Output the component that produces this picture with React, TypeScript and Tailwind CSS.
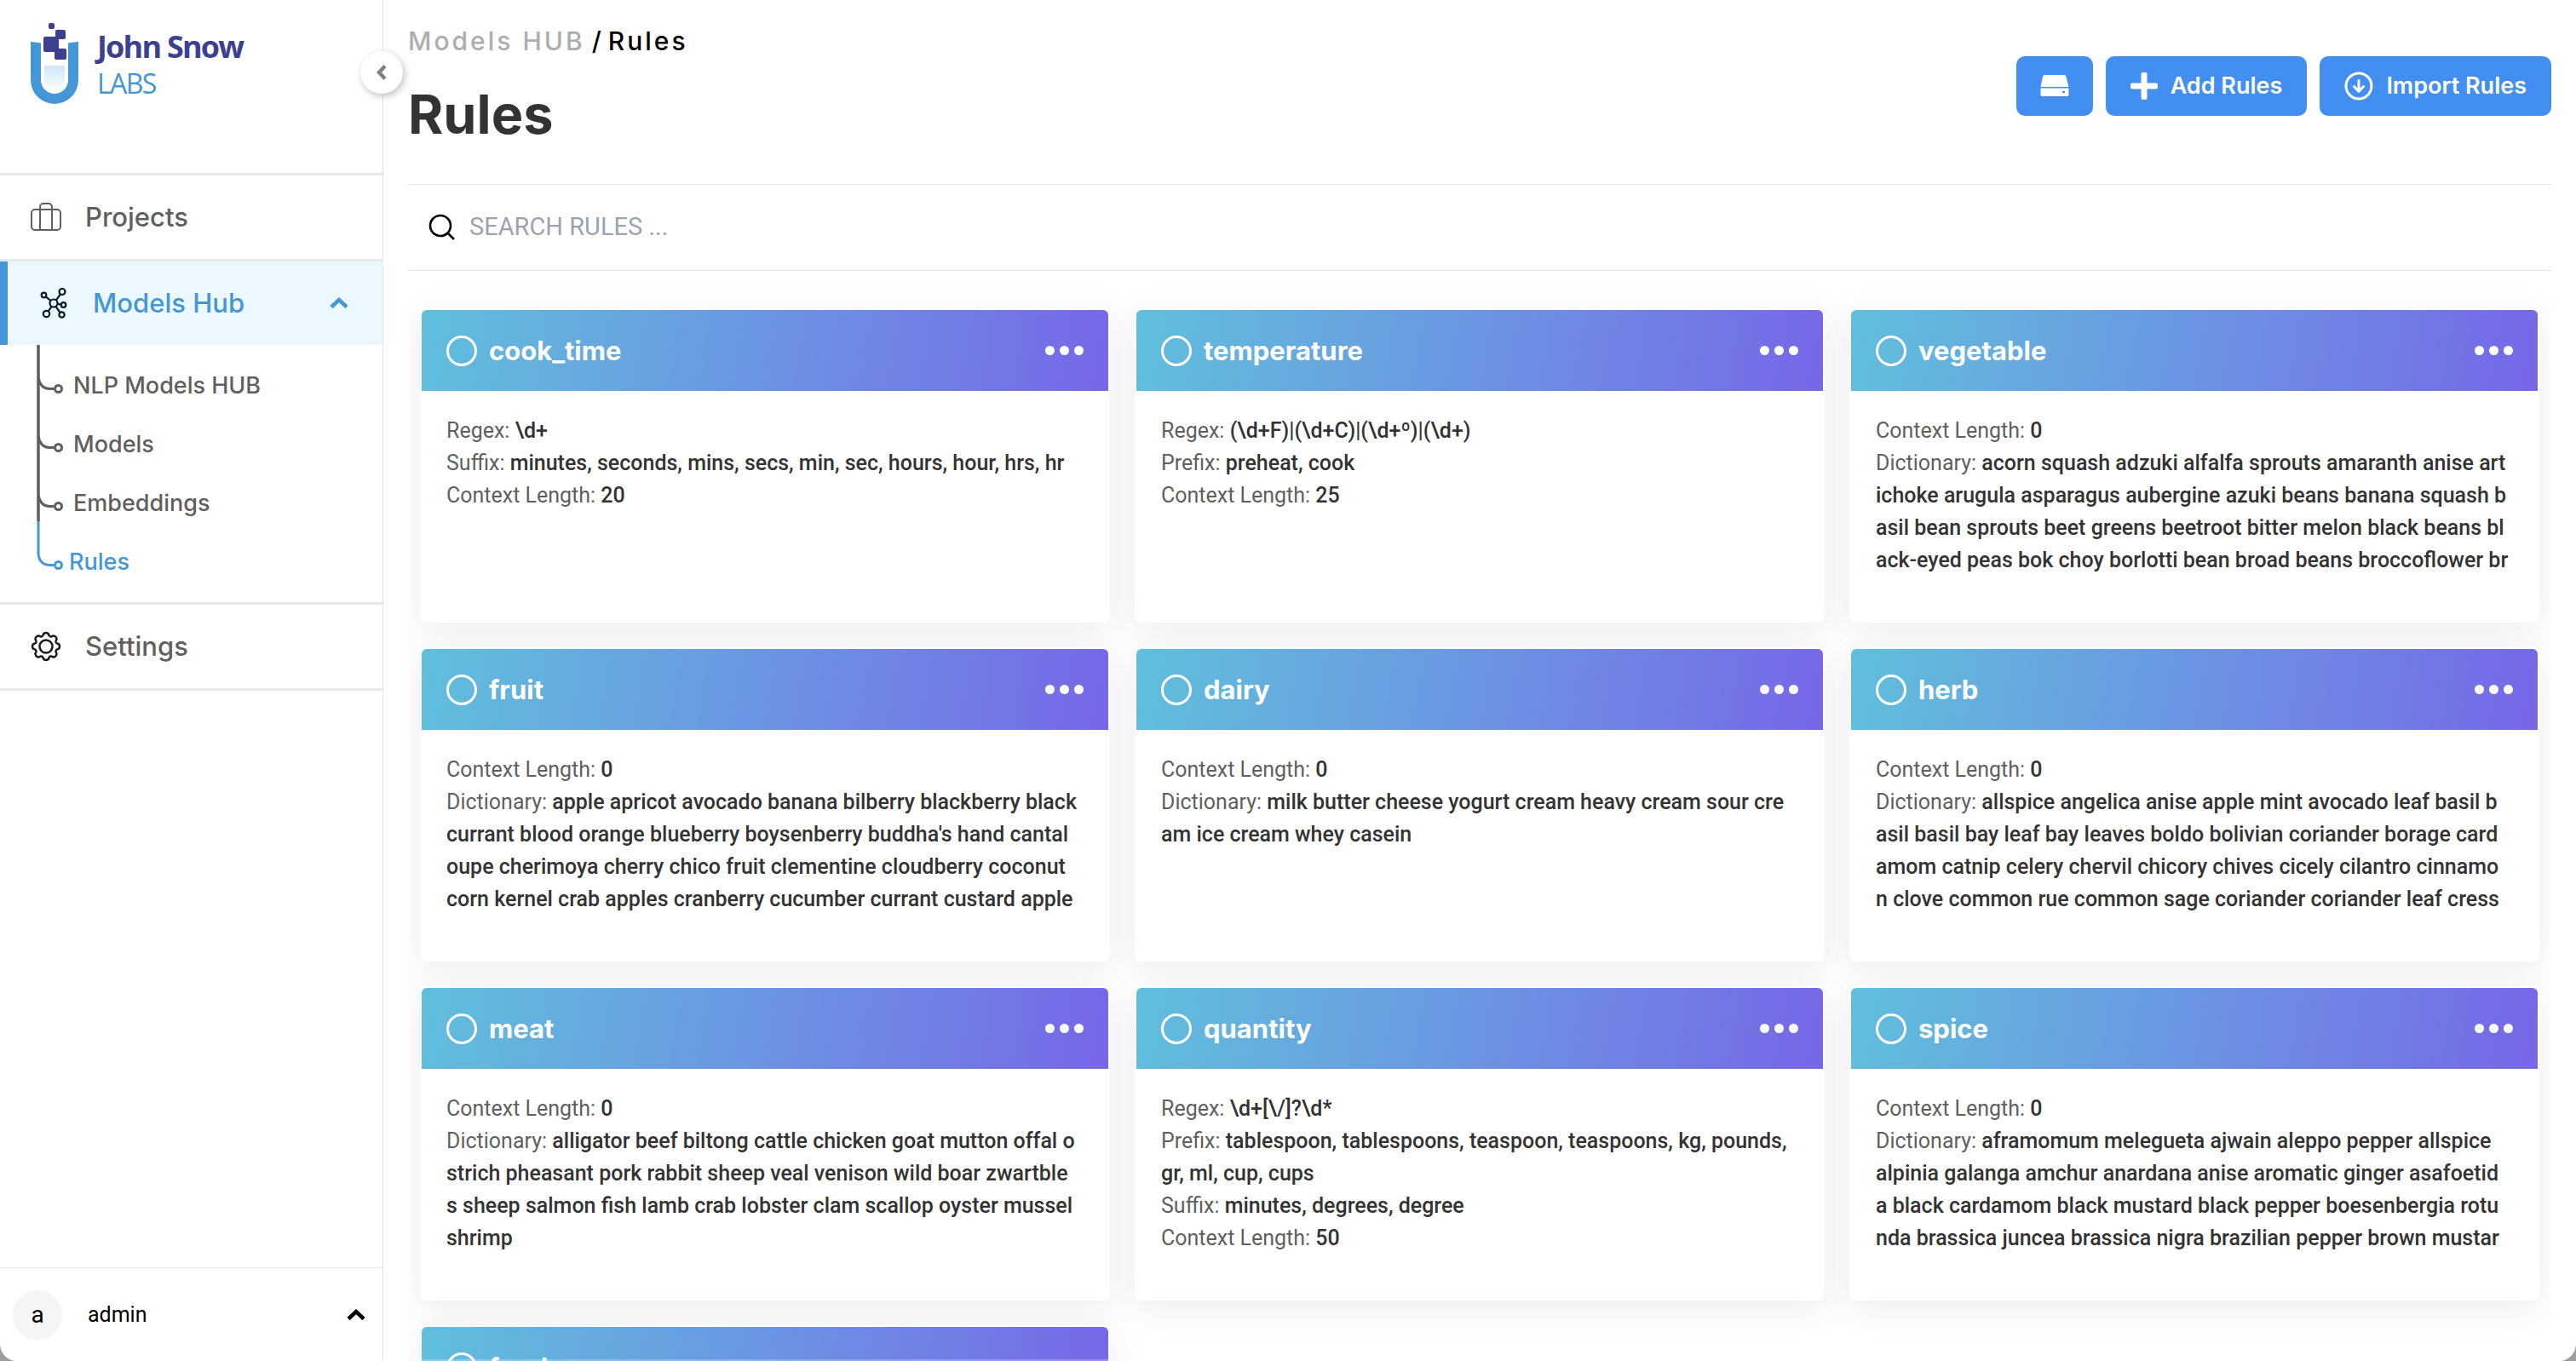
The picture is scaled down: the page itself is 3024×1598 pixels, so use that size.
const F = "font-['Inter',sans-serif]";

type Field = { label: string; value: string };
type Rule = { name: string; fields: Field[] };

const ctx = (value: string): Field => ({ label: "Context Length", value });
const dict = (...lines: string[]): Field => ({ label: "Dictionary", value: lines.join("\n") });

const RULES: Rule[] = [
  {
    name: "cook_time",
    fields: [
      { label: "Regex", value: "\\d+" },
      { label: "Suffix", value: "minutes, seconds, mins, secs, min, sec, hours, hour, hrs, hr" },
      ctx("20"),
    ],
  },
  {
    name: "temperature",
    fields: [
      { label: "Regex", value: "(\\d+F)|(\\d+C)|(\\d+º)|(\\d+)" },
      { label: "Prefix", value: "preheat, cook" },
      ctx("25"),
    ],
  },
  {
    name: "vegetable",
    fields: [
      ctx("0"),
      dict(
        "acorn squash adzuki alfalfa sprouts amaranth anise art",
        "ichoke arugula asparagus aubergine azuki beans banana squash b",
        "asil bean sprouts beet greens beetroot bitter melon black beans bl",
        "ack-eyed peas bok choy borlotti bean broad beans broccoflower br",
      ),
    ],
  },
  {
    name: "fruit",
    fields: [
      ctx("0"),
      dict(
        "apple apricot avocado banana bilberry blackberry black",
        "currant blood orange blueberry boysenberry buddha's hand cantal",
        "oupe cherimoya cherry chico fruit clementine cloudberry coconut",
        "corn kernel crab apples cranberry cucumber currant custard apple",
      ),
    ],
  },
  {
    name: "dairy",
    fields: [
      ctx("0"),
      dict("milk butter cheese yogurt cream heavy cream sour cre", "am ice cream whey casein"),
    ],
  },
  {
    name: "herb",
    fields: [
      ctx("0"),
      dict(
        "allspice angelica anise apple mint avocado leaf basil b",
        "asil basil bay leaf bay leaves boldo bolivian coriander borage card",
        "amom catnip celery chervil chicory chives cicely cilantro cinnamo",
        "n clove common rue common sage coriander coriander leaf cress",
      ),
    ],
  },
  {
    name: "meat",
    fields: [
      ctx("0"),
      dict(
        "alligator beef biltong cattle chicken goat mutton offal o",
        "strich pheasant pork rabbit sheep veal venison wild boar zwartble",
        "s sheep salmon fish lamb crab lobster clam scallop oyster mussel",
        "shrimp",
      ),
    ],
  },
  {
    name: "quantity",
    fields: [
      { label: "Regex", value: "\\d+[\\/]?\\d*" },
      { label: "Prefix", value: "tablespoon, tablespoons, teaspoon, teaspoons, kg, pounds, gr, ml, cup, cups" },
      { label: "Suffix", value: "minutes, degrees, degree" },
      ctx("50"),
    ],
  },
  {
    name: "spice",
    fields: [
      ctx("0"),
      dict(
        "aframomum melegueta ajwain aleppo pepper allspice",
        "alpinia galanga amchur anardana anise aromatic ginger asafoetid",
        "a black cardamom black mustard black pepper boesenbergia rotu",
        "nda brassica juncea brassica nigra brazilian pepper brown mustar",
      ),
    ],
  },
  { name: "food", fields: [ctx("0")] },
];

function Logo() {
  return (
    <a href="#home" className="flex items-start gap-[22px] pl-9 pt-7">
      <svg width="56" height="94" viewBox="0 0 56 94" className="overflow-visible" aria-hidden="true">
        <defs>
          <linearGradient id="liquid" x1="0" y1="0" x2="0" y2="1">
            <stop offset="0" stopColor="#cbe8f8" />
            <stop offset="1" stopColor="#ffffff" />
          </linearGradient>
        </defs>
        <path d="M16 49H40V68a12 12 0 0 1-24 0Z" fill="url(#liquid)" />
        <path d="M0 21L12 22.500V66a16 16 0 0 0 32 0V22.500L56 21V66a28 28 0 0 1-56 0Z" fill="#4596d5" />
        <g fill="#3d3f91">
          <rect x="21" y="-1" width="7" height="7" rx="2" />
          <rect x="29" y="7" width="12" height="11" rx="2" />
          <rect x="15" y="15" width="18" height="18" rx="2" />
          <rect x="28" y="29" width="14" height="13" rx="2" />
        </g>
      </svg>
      <span className="flex flex-col pt-1 font-['Open_Sans',sans-serif]">
        <span className="text-[36px] font-bold leading-[46px] tracking-tighter text-[#3d3f91]">John Snow</span>
        <span className="text-[32px] leading-[40px] tracking-tighter text-[#4596d5]">LABS</span>
      </span>
    </a>
  );
}

function ChevronUp({ className }: { className: string }) {
  return (
    <svg width="22" height="14" viewBox="0 0 22 14" fill="none" stroke="currentColor" strokeWidth="4.500" className={className} aria-hidden="true">
      <path d="M2 11.500L11 3L20 11.500" />
    </svg>
  );
}

function Branch({ last }: { last?: boolean }) {
  return (
    <svg width="32" height="69" viewBox="0 0 32 69" fill="none" stroke="currentColor" strokeWidth="3" className="shrink-0 overflow-visible" aria-hidden="true">
      {last ? (
        <path d="M2 0V38Q3 51 15 51.500H20" />
      ) : (
        <>
          <path d="M2 0V69" strokeWidth="3.500" />
          <path d="M2 38Q4 51 15 51.500H20" />
        </>
      )}
      <circle cx="25.500" cy="51.500" r="4" />
    </svg>
  );
}

function Sidebar() {
  return (
    <aside className={`relative flex w-[450px] shrink-0 flex-col border-r border-[#e6e6e6] ${F}`}>
      <div className="h-[203px]">
        <Logo />
      </div>
      <button type="button" aria-label="Collapse sidebar" className="absolute -right-[24px] top-[60px] z-10 flex size-[50px] items-center justify-center rounded-full bg-white text-[#808080] shadow-[2px_3px_8px_rgba(0,0,0,0.25)]">
        <svg width="12" height="18" viewBox="0 0 12 18" fill="none" stroke="currentColor" strokeWidth="4.500" aria-hidden="true">
          <path d="M10 1.500L3 9L10 16.500" />
        </svg>
      </button>
      <nav className="flex flex-col text-[31px] font-medium text-[#5f5f5f]">
        <a href="#projects" className="flex h-[101px] items-center gap-7 border-t-[3px] border-[#e8e8e8] pl-9">
          <svg width="36" height="34" viewBox="0 0 36 34" fill="none" stroke="currentColor" strokeWidth="2" aria-hidden="true">
            <rect x="1" y="8" width="34" height="24" rx="4" />
            <path d="M11 32V5a4 4 0 0 1 4-4h6a4 4 0 0 1 4 4V32" />
          </svg>
          Projects
        </a>
        <a href="#models-hub" aria-expanded="true" className="flex h-[101px] items-center border-t-[3px] border-[#e8e8e8] bg-[#ecf8ff] text-[#4596d5]">
          <span className="h-full w-[9px] bg-[#4596d5]" />
          <svg width="32" height="36" viewBox="0 0 32 36" fill="none" stroke="#0b1a28" strokeWidth="2.200" className="ml-[38px]" aria-hidden="true">
            <circle cx="16" cy="18" r="4.500" />
            <circle cx="4.500" cy="8.500" r="2.800" />
            <circle cx="26" cy="4.500" r="3.500" />
            <circle cx="27.500" cy="20" r="2.800" />
            <circle cx="7.500" cy="30.500" r="3.700" />
            <circle cx="25.500" cy="31.500" r="3.200" />
            <path d="M6.800 10.300L12.500 15M24 7.500L18.800 14.300M20.500 18.800L24.700 19.600M13.500 21.800L9.600 27.500M18.500 21.800L23.500 29" />
          </svg>
          <span className="ml-[30px]">Models Hub</span>
          <ChevronUp className="ml-auto mr-10" />
        </a>
        <ul className="flex flex-col pb-[26px] pl-[43px] text-[27px]">
          {["NLP Models HUB", "Models", "Embeddings"].map((label) => (
            <li key={label} className="h-[69px]">
              <a href={"#" + label} className="flex items-start gap-[11px]">
                <Branch />
                <span className="mt-[30px] leading-9">{label}</span>
              </a>
            </li>
          ))}
          <li className="h-[69px] text-[#4596d5]">
            <a href="#rules" aria-current="page" className="flex items-start gap-[6px]">
              <Branch last />
              <span className="mt-[30px] leading-9">Rules</span>
            </a>
          </li>
        </ul>
        <a href="#settings" className="flex h-[104px] items-center gap-7 border-y-[3px] border-[#e8e8e8] pl-9">
          <svg width="36" height="36" viewBox="0 0 36 36" fill="none" stroke="#1a1a1a" strokeWidth="2.400" strokeLinejoin="round" aria-hidden="true">
            <circle cx="18" cy="18" r="7.500" />
            <path d="M14.500 5Q15 2 18 2Q21 2 21.500 5Q22.500 7 24.800 6.300Q27 4.500 29.300 6.700Q31.500 9 29.700 11.200Q29 13.500 31 14.500Q34 15 34 18Q34 21 31 21.500Q29 22.500 29.700 24.800Q31.500 27 29.300 29.300Q27 31.500 24.800 29.700Q22.500 29 21.500 31Q21 34 18 34Q15 34 14.500 31Q13.500 29 11.200 29.700Q9 31.500 6.700 29.300Q4.500 27 6.300 24.800Q7 22.500 5 21.500Q2 21 2 18Q2 15 5 14.500Q7 13.500 6.300 11.200Q4.500 9 6.700 6.700Q9 4.500 11.200 6.300Q13.500 7 14.500 5Z" />
          </svg>
          Settings
        </a>
      </nav>
      <button type="button" className="mt-auto flex h-[110px] items-center border-t border-[#e6e6e6] pl-[15px] font-['Roboto',sans-serif] text-[25px] text-black">
        <span className="flex size-[58px] items-center justify-center rounded-full bg-[#f5f5f5] text-[28px]">a</span>
        <span className="ml-[30px]">admin</span>
        <ChevronUp className="ml-auto mr-[20px]" />
      </button>
    </aside>
  );
}

const BTN = "flex h-[70px] items-center rounded-[10px] bg-[#428ff1] text-[27px] font-semibold text-white";

function Header() {
  return (
    <header className={`flex h-[217px] shrink-0 items-start justify-between border-b border-[#e6e6e6] ${F}`}>
      <div className="pt-[28px]">
        <nav aria-label="Breadcrumb" className="flex items-center gap-2 text-[30px] font-medium leading-[40px]">
          <a href="#hub" className="tracking-widest text-[#adadad]">Models HUB</a>
          <span className="text-black">/</span>
          <span className="tracking-widest text-black">Rules</span>
        </nav>
        <h1 className="mt-[32px] text-[63px] font-bold leading-[68px] text-[#333333]">Rules</h1>
      </div>
      <div className="flex gap-[15px] pt-[66px]">
        <button type="button" aria-label="Storage" className={`${BTN} w-[90px] justify-center`}>
          <svg width="34" height="26" viewBox="0 0 34 26" fill="currentColor" aria-hidden="true">
            <path d="M5 0H28Q30 0 30.500 2L33.500 14H0.500L3 2Q3.500 0 5 0Z" />
            <path d="M0.500 15.500H33.500V23Q33.500 25 31.500 25H2.500Q0.500 25 0.500 23ZM26 19V21H29V19Z" fillRule="evenodd" />
          </svg>
        </button>
        <button type="button" className={`${BTN} gap-[15px] px-[29px]`}>
          <svg width="32" height="32" viewBox="0 0 32 32" fill="currentColor" aria-hidden="true">
            <rect x="12.500" y="0" width="7" height="32" rx="2" />
            <rect x="0" y="12.500" width="32" height="7" rx="2" />
          </svg>
          Add Rules
        </button>
        <button type="button" className={`${BTN} gap-[15px] px-[29px]`}>
          <svg width="34" height="34" viewBox="0 0 34 34" fill="none" stroke="currentColor" strokeWidth="3" strokeLinecap="round" strokeLinejoin="round" aria-hidden="true">
            <circle cx="17" cy="17" r="15" />
            <path d="M17 10.500V23M11.500 17.500L17 23.500L22.500 17.500" />
          </svg>
          Import Rules
        </button>
      </div>
    </header>
  );
}

function RuleCard({ rule }: { rule: Rule }) {
  return (
    <article className="h-[369px] rounded-lg border-2 border-white bg-white shadow-[0_10px_40px_rgba(60,60,100,0.09)]">
      <div className={`flex h-[95px] items-center rounded-t-[6px] bg-linear-[100deg,#60bfdc,#6b94e2_50%,#7667e8] pl-[29px] pr-[29px] text-white ${F}`}>
        <input type="checkbox" id={"pick-" + rule.name} className="size-9 appearance-none rounded-full border-3 border-white" />
        <label htmlFor={"pick-" + rule.name} className="ml-[14px] text-[31px] font-bold leading-9">
          {rule.name}
        </label>
        <button type="button" aria-label={"Options for " + rule.name} className="ml-auto flex gap-[6px]">
          <span className="size-[11px] rounded-full bg-white" />
          <span className="size-[11px] rounded-full bg-white" />
          <span className="size-[11px] rounded-full bg-white" />
        </button>
      </div>
      <dl className="px-[29px] pt-[28px] text-[25px] leading-[38px] text-[#5f5f5f]">
        {rule.fields.map((f) => (
          <div key={f.label} className={f.label === "Dictionary" ? "break-all whitespace-pre-line" : ""}>
            <dt className="inline">{f.label}: </dt>
            <dd className="inline font-medium text-[#333333]">{f.value}</dd>
          </div>
        ))}
      </dl>
    </article>
  );
}

export default function App() {
  return (
    <div className="h-screen bg-[#9c9c9c] font-['Roboto',sans-serif]">
      <div className="relative flex h-full overflow-hidden rounded-b-[20px] bg-white">
        <Sidebar />
        <main className="flex min-w-0 flex-1 flex-col px-[29px]">
          <Header />
          <div className="flex h-[101px] shrink-0 items-center gap-4 border-b border-[#e6e6e6] pl-6">
            <svg width="32" height="32" viewBox="0 0 32 32" fill="none" stroke="#000" strokeWidth="2.600" aria-hidden="true">
              <circle cx="14" cy="14" r="12" />
              <path d="M22.500 22.500L30 30" />
            </svg>
            <input type="search" aria-label="Search rules" placeholder="SEARCH RULES ..." className="flex-1 text-[29px] outline-none placeholder:text-[#9ca3af]" />
          </div>
          <section className="grid min-h-0 flex-1 grid-cols-3 content-start gap-[29px] overflow-hidden px-[14px] pt-[44px]">
            {RULES.map((r) => (
              <RuleCard key={r.name} rule={r} />
            ))}
          </section>
        </main>
        <div className="pointer-events-none absolute inset-x-0 bottom-0 h-[2px] bg-white/25" />
      </div>
    </div>
  );
}
